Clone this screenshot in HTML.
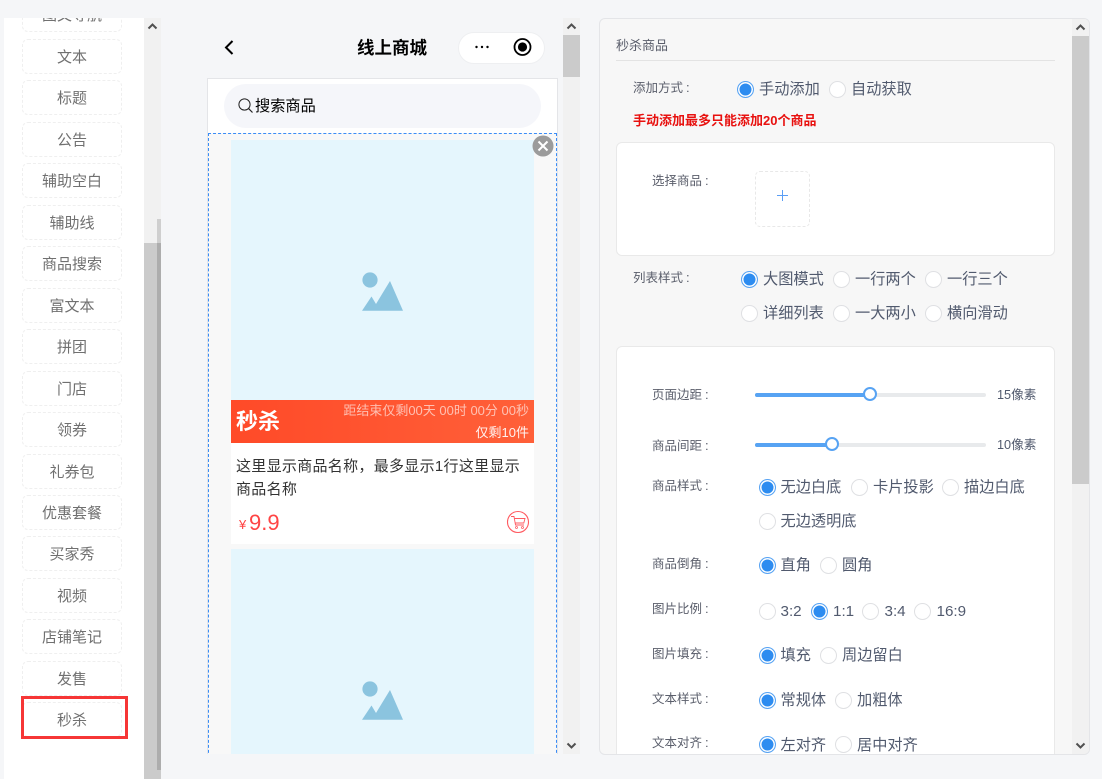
<!DOCTYPE html>
<html><head><meta charset="utf-8"><style>
html,body{margin:0;padding:0;width:1102px;height:779px;overflow:hidden;background:#f5f6f8;font-family:"Liberation Sans","Noto Sans CJK SC",sans-serif}
div,span{box-sizing:border-box}
.a{position:absolute}
.t{position:absolute;white-space:nowrap;line-height:20px;height:20px}
.it{position:absolute;left:22px;width:100px;height:35px;border:1px dashed #efefef;border-radius:6px;text-align:center;font-size:15px;line-height:33px;padding-top:1px;color:#707070;background:#fff}
.l{position:absolute;white-space:nowrap;line-height:20px;height:20px;font-size:12.5px;color:#5a5e6b;margin-top:1px}
.l i{font-style:normal;font-family:"Liberation Sans";font-size:13px;padding-left:3px}
.r{position:absolute;white-space:nowrap;line-height:20px;height:20px;font-size:15.2px;color:#515a6e;margin-top:1px}
.o{position:absolute;width:17px;height:17px;border-radius:50%;border:1px solid #dfe0e3;background:#fff}
.o.c{border:1px solid #57a3f3;box-shadow:inset 0 0 0 1.5px #fff,inset 0 0 0 7.5px #2d8cf0}
.track{position:absolute;left:755px;width:231px;height:4px;border-radius:2px;background:#e8eaec}
.fill{position:absolute;left:755px;height:4px;border-radius:2px;background:#57a3f3}
.h{position:absolute;width:14px;height:14px;border-radius:50%;border:2px solid #57a3f3;background:#fff}
.sb{position:absolute;width:17px;background:#f1f1f1}
.th{position:absolute;width:17px;background:#cbcbcb}
</style></head><body>

<!-- left sidebar -->
<div class="a" style="left:4px;top:18px;width:140px;height:761px;background:#fff;overflow:hidden">
<div class="a" style="left:-4px;top:-18px;width:144px;height:779px">
<div class="it" style="top:-3px">图文导航</div>
<div class="it" style="top:39px">文本</div>
<div class="it" style="top:80px">标题</div>
<div class="it" style="top:122px">公告</div>
<div class="it" style="top:163px">辅助空白</div>
<div class="it" style="top:205px">辅助线</div>
<div class="it" style="top:246px">商品搜索</div>
<div class="it" style="top:288px">富文本</div>
<div class="it" style="top:329px">拼团</div>
<div class="it" style="top:371px">门店</div>
<div class="it" style="top:412px">领券</div>
<div class="it" style="top:454px">礼券包</div>
<div class="it" style="top:495px">优惠套餐</div>
<div class="it" style="top:536px">买家秀</div>
<div class="it" style="top:578px">视频</div>
<div class="it" style="top:619px">店铺笔记</div>
<div class="it" style="top:661px">发售</div>
<div class="it" style="top:702px">秒杀</div>
</div>
</div>
<div class="a" style="left:21px;top:696px;width:107px;height:43px;border:3px solid #f63636"></div>

<div class="sb" style="left:144px;top:18px;height:761px"></div>
<div class="th" style="left:144px;top:243px;height:536px"></div>
<div class="a" style="left:157px;top:219px;width:4px;height:24px;background:#cfcfcf"></div>
<div class="a" style="left:157px;top:243px;width:4px;height:527px;background:#adadad"></div>
<svg class="a" style="left:144px;top:18px" width="17" height="17"><path d="M4.5 10.5L8.5 6.5L12.5 10.5" fill="none" stroke="#505050" stroke-width="2"/></svg>

<!-- phone header -->
<svg class="a" style="left:222px;top:38px" width="14" height="18"><path d="M10.5 3L4 9.5L10.5 16" fill="none" stroke="#000" stroke-width="2"/></svg>
<div class="t" style="left:342px;width:100px;text-align:center;top:38px;font-size:17.5px;font-weight:bold;color:#000">线上商城</div>
<div class="a" style="left:458px;top:32px;width:87px;height:32px;border:1px solid #eeeff1;border-radius:16px;background:#fff"></div>
<svg class="a" style="left:470px;top:36px" width="66" height="24"><circle cx="6.5" cy="11" r="1.2"/><circle cx="12" cy="11" r="1.2"/><circle cx="17.5" cy="11" r="1.2"/><circle cx="52.5" cy="11" r="8" fill="none" stroke="#000" stroke-width="1.8"/><circle cx="52.5" cy="11" r="4.6"/></svg>

<!-- phone body -->
<div class="a" style="left:207px;top:78px;width:351px;height:676px;background:#fff;border:1px solid #e4e5e8;border-bottom:0;overflow:hidden">
<div class="a" style="left:0;top:54px;width:349px;height:640px;background:#f8f8f8;border:1px dashed #3a8cf6;border-bottom:0"></div>
</div>
<div class="a" style="left:224px;top:84px;width:317px;height:44px;border-radius:22px;background:#f5f6fa"></div>
<svg class="a" style="left:237px;top:97px" width="18" height="18"><circle cx="7.5" cy="7.5" r="5.6" fill="none" stroke="#222" stroke-width="1"/><path d="M11.6 11.6L15.5 15.5" stroke="#222" stroke-width="1.2"/></svg>
<div class="t" style="left:255px;top:97px;font-size:15.2px;color:#000">搜索商品</div>

<div class="a" style="left:231px;top:140px;width:303px;height:260px;background:#e5f6fd"></div>
<svg class="a" style="left:355px;top:265px" width="55" height="50"><circle cx="15" cy="15" r="7.6" fill="#8bc4df"/><path d="M7 45.7L16.5 31.5L21 39L35 16L48 45.7Z" fill="#8bc4df"/></svg>
<div class="a" style="left:231px;top:400px;width:303px;height:43px;background:linear-gradient(90deg,#ff4a28,#ff6039)"></div>
<div class="t" style="left:236px;top:412px;font-size:22px;font-weight:bold;color:#fff">秒杀</div>
<div class="t" style="right:573px;top:401px;font-size:13px;color:rgba(255,255,255,.62)">距结束仅剩00天 00时 00分 00秒</div>
<div class="t" style="right:573px;top:423px;font-size:13px;color:rgba(255,255,255,.92)">仅剩10件</div>
<div class="a" style="left:231px;top:443px;width:303px;height:101px;background:#fff"></div>
<div class="t" style="left:236px;top:457px;font-size:15px;color:#333;letter-spacing:.3px">这里显示商品名称&#xFF0C;最多显示1行这里显示</div>
<div class="t" style="left:236px;top:480px;font-size:15px;color:#333;letter-spacing:.3px">商品名称</div>
<div class="t" style="left:239px;top:515px;font-size:13px;color:#ff4444">¥</div>
<div class="t" style="left:249px;top:513px;font-size:22px;color:#ff4444">9.9</div>
<svg class="a" style="left:506px;top:510px" width="24" height="24" fill="none" stroke="#ff5a60"><circle cx="12" cy="12" r="10.5" stroke-width="1.1"/><path d="M5 6.5H8L9.5 15H18M8.4 8.5H19L17.8 13H9.2" stroke-width=".9"/><circle cx="10.5" cy="17.5" r="1" stroke-width=".8"/><circle cx="16.5" cy="17.5" r="1" stroke-width=".8"/></svg>
<div class="a" style="left:231px;top:549px;width:303px;height:205px;background:#e5f6fd"></div>
<svg class="a" style="left:355px;top:674px" width="55" height="50"><circle cx="15" cy="15" r="7.6" fill="#8bc4df"/><path d="M7 45.7L16.5 31.5L21 39L35 16L48 45.7Z" fill="#8bc4df"/></svg>
<svg class="a" style="left:532px;top:135px" width="22" height="22"><circle cx="11" cy="11" r="10.5" fill="#9b9b9b"/><path d="M6.5 6.5L15.5 15.5M15.5 6.5L6.5 15.5" stroke="#fff" stroke-width="2"/></svg>

<!-- mid scrollbar -->
<div class="sb" style="left:563px;top:18px;height:736px"></div>
<div class="th" style="left:563px;top:35px;height:42px"></div>
<svg class="a" style="left:563px;top:18px" width="17" height="17"><path d="M4.5 10.5L8.5 6.5L12.5 10.5" fill="none" stroke="#505050" stroke-width="2"/></svg>
<svg class="a" style="left:563px;top:737px" width="17" height="17"><path d="M4.5 6.5L8.5 10.5L12.5 6.5" fill="none" stroke="#505050" stroke-width="2"/></svg>

<!-- right panel -->
<div class="a" style="left:599px;top:18px;width:491px;height:737px;border:1px solid #e4e5e8;border-radius:6px;background:#f7f7f7;overflow:hidden">
<div class="a" style="left:-600px;top:-19px;width:1102px;height:779px">

<div class="t" style="left:616px;top:36px;font-size:13px;color:#5a5e6b">秒杀商品</div>
<div class="a" style="left:616px;top:60px;width:439px;height:1px;background:#e3e3e3"></div>

<div class="l" style="left:633px;top:77px">添加方式<i>:</i></div>
<div class="o c" style="left:737px;top:81px"></div><div class="r" style="left:759px;top:79px">手动添加</div>
<div class="o" style="left:829px;top:81px"></div><div class="r" style="left:851px;top:79px">自动获取</div>
<div class="t" style="left:633px;top:111px;font-size:13px;font-weight:bold;color:#e8110f">手动添加最多只能添加20个商品</div>

<div class="a" style="left:616px;top:142px;width:439px;height:114px;background:#fff;border:1px solid #e9e9e9;border-radius:6px"></div>
<div class="l" style="left:652px;top:170px">选择商品<i>:</i></div>
<div class="a" style="left:755px;top:171px;width:55px;height:56px;border:1px dashed #e8e8e8;border-radius:5px"></div>
<div class="a" style="left:777px;top:195px;width:11px;height:1px;background:#5a9ef5"></div>
<div class="a" style="left:782px;top:190px;width:1px;height:11px;background:#5a9ef5"></div>

<div class="l" style="left:633px;top:267px">列表样式<i>:</i></div>
<div class="o c" style="left:741px;top:271px"></div><div class="r" style="left:763px;top:269px">大图模式</div>
<div class="o" style="left:833px;top:271px"></div><div class="r" style="left:855px;top:269px">一行两个</div>
<div class="o" style="left:925px;top:271px"></div><div class="r" style="left:947px;top:269px">一行三个</div>
<div class="o" style="left:741px;top:305px"></div><div class="r" style="left:763px;top:303px">详细列表</div>
<div class="o" style="left:833px;top:305px"></div><div class="r" style="left:855px;top:303px">一大两小</div>
<div class="o" style="left:925px;top:305px"></div><div class="r" style="left:947px;top:303px">横向滑动</div>

<div class="a" style="left:616px;top:346px;width:439px;height:440px;background:#fff;border:1px solid #e9e9e9;border-radius:6px"></div>

<div class="l" style="left:652px;top:384px">页面边距<i>:</i></div>
<div class="track" style="top:393px"></div><div class="fill" style="top:393px;width:115px"></div><div class="h" style="left:863px;top:387px"></div>
<div class="t" style="left:997px;top:385px;font-size:12.7px;color:#515a6e">15像素</div>
<div class="l" style="left:652px;top:435px">商品间距<i>:</i></div>
<div class="track" style="top:443px"></div><div class="fill" style="top:443px;width:77px"></div><div class="h" style="left:825px;top:437px"></div>
<div class="t" style="left:997px;top:435px;font-size:12.7px;color:#515a6e">10像素</div>

<div class="l" style="left:652px;top:475px">商品样式<i>:</i></div>
<div class="o c" style="left:759px;top:479px"></div><div class="r" style="left:780.5px;top:477px">无边白底</div>
<div class="o" style="left:851px;top:479px"></div><div class="r" style="left:873px;top:477px">卡片投影</div>
<div class="o" style="left:942px;top:479px"></div><div class="r" style="left:964px;top:477px">描边白底</div>
<div class="o" style="left:759px;top:513px"></div><div class="r" style="left:780.5px;top:511px">无边透明底</div>

<div class="l" style="left:652px;top:553px">商品倒角<i>:</i></div>
<div class="o c" style="left:759px;top:557px"></div><div class="r" style="left:780.5px;top:555px">直角</div>
<div class="o" style="left:820px;top:557px"></div><div class="r" style="left:842px;top:555px">圆角</div>

<div class="l" style="left:652px;top:598px">图片比例<i>:</i></div>
<div class="o" style="left:759px;top:603px"></div><div class="r" style="left:780.5px;top:601px">3:2</div>
<div class="o c" style="left:811px;top:603px"></div><div class="r" style="left:833px;top:601px">1:1</div>
<div class="o" style="left:862px;top:603px"></div><div class="r" style="left:884.5px;top:601px">3:4</div>
<div class="o" style="left:914px;top:603px"></div><div class="r" style="left:936.5px;top:601px">16:9</div>

<div class="l" style="left:652px;top:643px">图片填充<i>:</i></div>
<div class="o c" style="left:759px;top:647px"></div><div class="r" style="left:780.5px;top:645px">填充</div>
<div class="o" style="left:820px;top:647px"></div><div class="r" style="left:842px;top:645px">周边留白</div>

<div class="l" style="left:652px;top:688px">文本样式<i>:</i></div>
<div class="o c" style="left:759px;top:692px"></div><div class="r" style="left:780.5px;top:690px">常规体</div>
<div class="o" style="left:835px;top:692px"></div><div class="r" style="left:857px;top:690px">加粗体</div>

<div class="l" style="left:652px;top:732px">文本对齐<i>:</i></div>
<div class="o c" style="left:759px;top:736px"></div><div class="r" style="left:780.5px;top:735px">左对齐</div>
<div class="o" style="left:835px;top:736px"></div><div class="r" style="left:857px;top:735px">居中对齐</div>

<div class="sb" style="left:1072px;top:19px;height:735px"></div>
<div class="th" style="left:1072px;top:36px;height:448px"></div>
<svg class="a" style="left:1072px;top:19px" width="17" height="17"><path d="M4.5 10.5L8.5 6.5L12.5 10.5" fill="none" stroke="#505050" stroke-width="2"/></svg>
<svg class="a" style="left:1072px;top:737px" width="17" height="17"><path d="M4.5 6.5L8.5 10.5L12.5 6.5" fill="none" stroke="#505050" stroke-width="2"/></svg>
</div>
</div>
</body></html>
